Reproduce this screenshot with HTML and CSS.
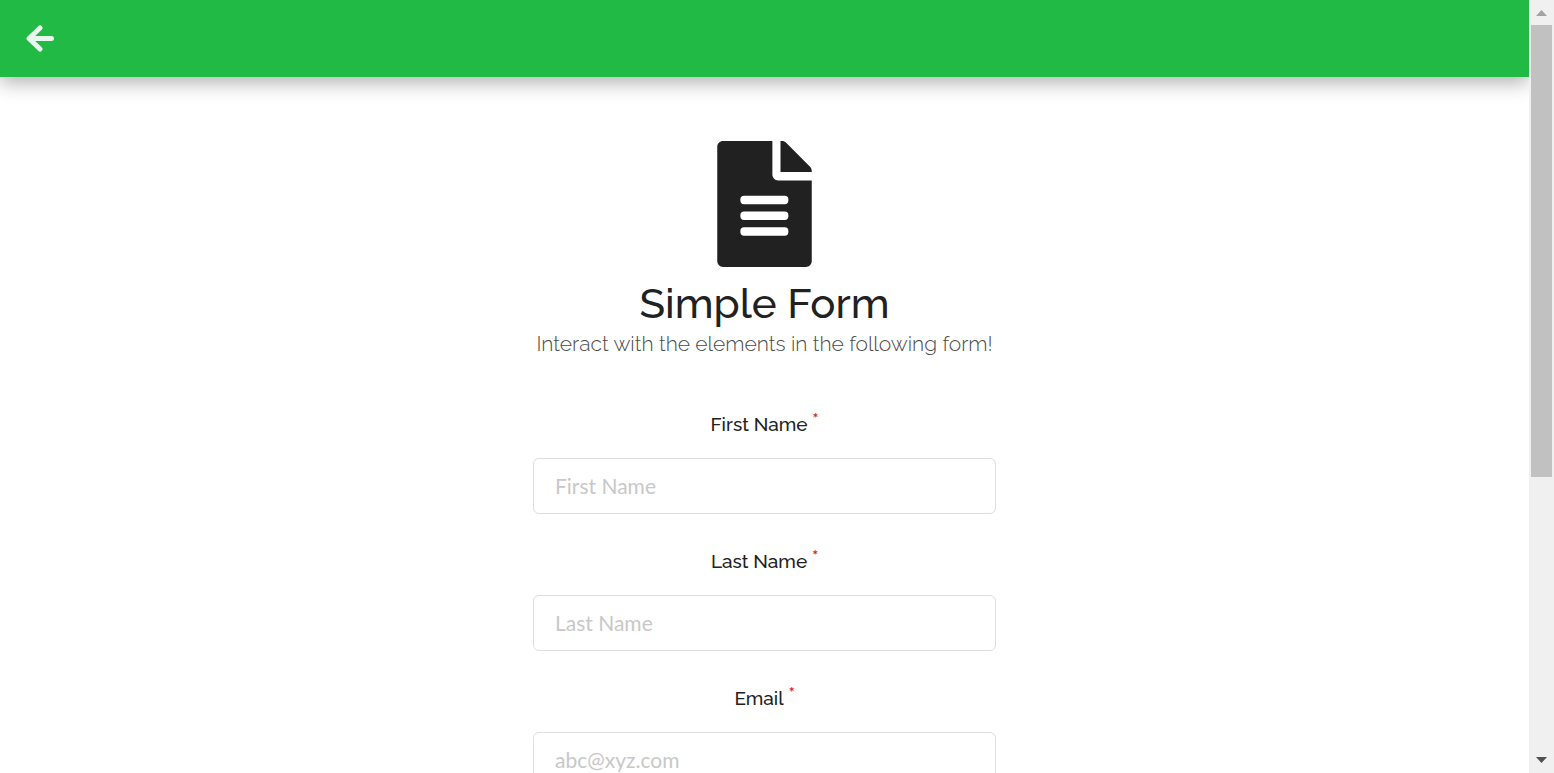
FILE: index.html
```html
<!DOCTYPE html>
<html lang="en">
<head>
<meta charset="utf-8">
<title>Simple Form</title>
<link rel="stylesheet" href="styles.css">
</head>
<body>
<div class="window">
  <div class="page">
    <header class="topbar">
      <a class="back" href="#" aria-label="Back">
        <svg class="back-icon" viewBox="0 0 28 26" aria-hidden="true">
          <path d="M14 2.500 3 13 14 23.500M3.500 13H25.500"/>
          <path class="back-tip" d="M2 13 9 7v12z"/>
        </svg>
      </a>
    </header>
    <main class="content">
      <svg class="doc-icon" viewBox="0 0 384 512" aria-hidden="true">
        <path d="M224 136V0H24C10.700 0 0 10.700 0 24v464c0 13.300 10.700 24 24 24h336c13.300 0 24-10.700 24-24V160H248c-13.200 0-24-10.800-24-24z"/>
        <path d="M257 0h6c6.400 0 12.500 2.500 17 7l97 98c4.500 4.500 7 10.600 7 16.900v4.100H257z"/>
        <g class="doc-lines"><rect x="94" y="222" width="195" height="35" rx="15"/><rect x="94" y="286" width="195" height="35" rx="15"/><rect x="94" y="350" width="195" height="35" rx="15"/></g>
      </svg>
      <h1 class="title">Simple Form</h1>
      <p class="subtitle">Interact with the elements in the following form!</p>
      <form class="form">
        <div class="field">
          <label class="label" for="first">First Name<span class="required">*</span></label>
          <input class="input" id="first" type="text" placeholder="First Name">
        </div>
        <div class="field">
          <label class="label" for="last">Last Name<span class="required">*</span></label>
          <input class="input" id="last" type="text" placeholder="Last Name">
        </div>
        <div class="field">
          <label class="label" for="email">Email<span class="required">*</span></label>
          <input class="input" id="email" type="email" placeholder="abc@xyz.com">
        </div>
      </form>
    </main>
  </div>
  <div class="scrollbar" aria-hidden="true">
    <svg class="scroll-arrow" viewBox="0 0 25 25"><path fill="#a3a3a3" d="M7 16 12.500 10 18 16z"/></svg>
    <div class="thumb"></div>
    <div class="track"></div>
    <svg class="scroll-arrow" viewBox="0 0 25 25"><path fill="#505050" d="M7 9 12.500 15 18 9z"/></svg>
  </div>
</div>
</body>
</html>
```

FILE: styles.css
```css
* { box-sizing: border-box; }
body {
  margin: 0;
  background: #fff;
  color: #212121;
  font-family: Raleway, Lato, sans-serif;
}
.window {
  display: flex;
  height: 100vh;
  overflow: hidden;
}
.page {
  flex: 1;
  min-width: 0;
  overflow: hidden;
}
.topbar {
  display: flex;
  align-items: center;
  padding: 25px 26px;
  background: #21ba45;
  box-shadow: 0 6px 18px rgba(0, 0, 0, .3);
}
.back { display: flex; }
.back-icon {
  width: 28px;
  height: 27px;
  fill: none;
  stroke: #e9f8ec;
  stroke-width: 5;
  stroke-linecap: round;
  stroke-linejoin: round;
}
.back-tip {
  fill: #e9f8ec;
  stroke: none;
}
.content {
  display: flex;
  flex-direction: column;
  align-items: center;
  padding: 64px 16px;
}
.doc-icon {
  width: 95px;
  height: 126px;
  fill: #212121;
}
.doc-lines { fill: #fff; }
.title {
  margin: 12px 0 0;
  font-size: 42px;
  font-weight: 500;
  line-height: 50px;
}
.subtitle {
  margin: 0;
  color: #4a4a4a;
  font-size: 21px;
  font-weight: 300;
  line-height: 30px;
}
.form {
  display: flex;
  flex-direction: column;
  gap: 32px;
  width: 100%;
  max-width: 463px;
  margin-top: 50px;
}
.field {
  display: flex;
  flex-direction: column;
  gap: 19px;
}
.label {
  font-size: 19px;
  font-weight: 500;
  line-height: 30px;
  text-align: center;
}
.required {
  margin-left: 5px;
  color: #e01b1b;
  font-family: Lato, sans-serif;
  font-size: 14px;
  font-weight: 700;
  line-height: 1;
  vertical-align: 8px;
}
.input {
  width: 100%;
  height: 56px;
  padding: 0 21px 2px;
  border: 1px solid #dedede;
  border-radius: 6px;
  background: #fff;
  font-family: Lato, sans-serif;
  font-size: 21px;
}
.input::placeholder { color: #c8c8c8; }
.scrollbar {
  display: flex;
  flex-direction: column;
  width: 25px;
  background: #f0f0f0;
}
.scroll-arrow {
  width: 25px;
  height: 25px;
}
.thumb {
  flex: 5;
  margin: 0 2px;
  background: #c1c1c1;
}
.track { flex: 3; }
```
